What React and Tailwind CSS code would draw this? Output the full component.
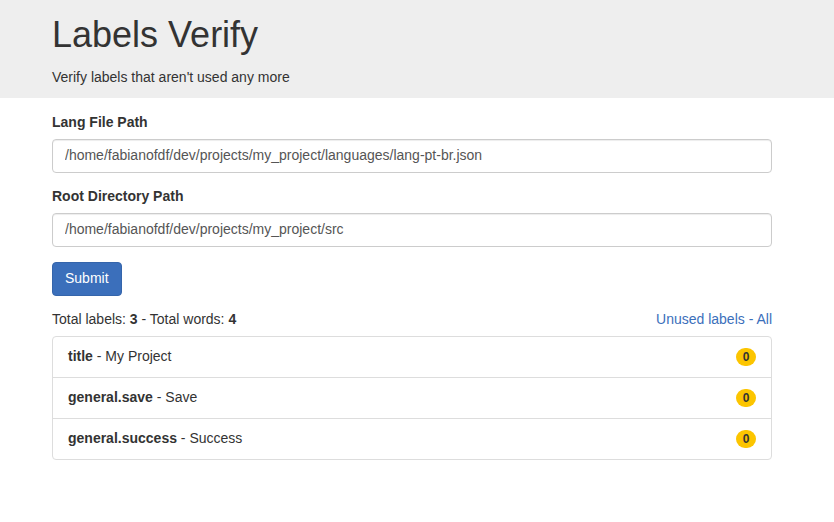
import React from 'react';

const labels = [
    { key: 'title', value: 'My Project', count: 0 },
    { key: 'general.save', value: 'Save', count: 0 },
    { key: 'general.success', value: 'Success', count: 0 },
];

function Field({ label, value, className }) {
    return (
        <div className={className}>
            <label className="block font-bold leading-5 mb-[7px]">{label}</label>
            <input
                readOnly
                value={value}
                className="block w-full h-[34px] px-3 pb-[2px] text-[14px] text-[#555] bg-white border border-[#ccc] rounded shadow-[inset_0_1px_1px_rgba(0,0,0,0.075)] outline-none"
            />
        </div>
    );
}

export default function App() {
    return (
        <div className="min-h-[522px] bg-white text-[14px] leading-5 text-[#333] font-['Liberation_Sans',Arial,sans-serif]">
            {/* Header */}
            <div className="bg-[#eee] pt-[15px] pb-[11px]">
                <div className="w-[720px] ml-[52px]">
                    <h1 className="text-[36px] leading-[40px] font-normal">Labels Verify</h1>
                    <p className="mt-[12px]">Verify labels that aren't used any more</p>
                </div>
            </div>

            <div className="w-[720px] ml-[52px] pt-[14px]">
                <Field label="Lang File Path" value="/home/fabianofdf/dev/projects/my_project/languages/lang-pt-br.json" />
                <Field className="mt-[13px]" label="Root Directory Path" value="/home/fabianofdf/dev/projects/my_project/src" />

                <button className="mt-[15px] h-[34px] px-3 pb-[2px] text-white bg-[#3b6fbb] border border-[#3565ab] rounded">
                    Submit
                </button>

                {/* Summary */}
                <div className="flex justify-between mt-[13px] mb-[7px]">
                    <div>
                        Total labels: <b>3</b> - Total words: <b>4</b>
                    </div>
                    <div className="text-[#3b6fbb]">
                        <a>Unused labels</a> - <a>All</a>
                    </div>
                </div>

                {/* Labels list */}
                <div className="border border-[#ddd] rounded">
                    {labels.map((l, i) => (
                        <div
                            key={l.key}
                            className={`flex items-center justify-between px-[15px] pt-[9px] pb-[11px] ${i > 0 ? 'border-t border-[#ddd]' : ''}`}
                        >
                            <div>
                                <b>{l.key}</b> - {l.value}
                            </div>
                            <span className="mt-[2px] min-w-[20px] h-[18px] px-[6px] flex items-center justify-center rounded-full bg-[#fcc500] text-[#333] text-[12px] font-bold leading-none">
                                {l.count}
                            </span>
                        </div>
                    ))}
                </div>
            </div>
        </div>
    );
}
